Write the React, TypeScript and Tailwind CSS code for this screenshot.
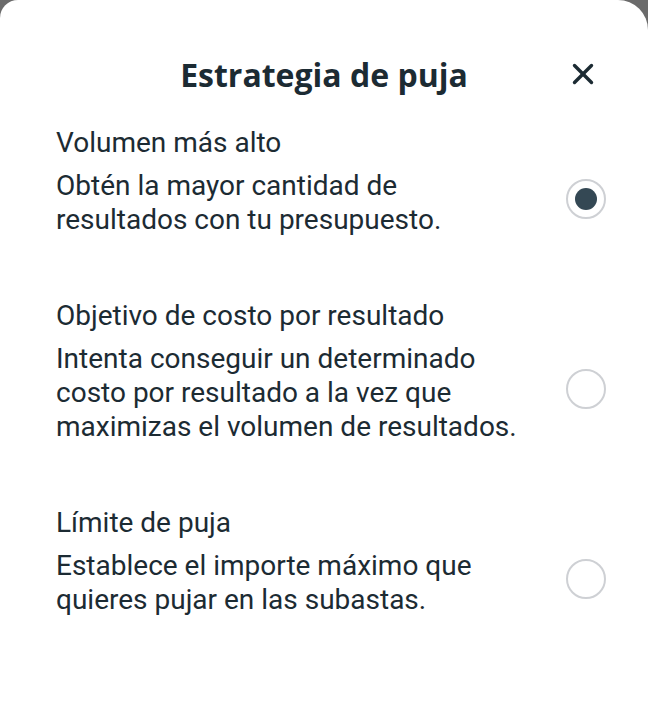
import { X } from 'lucide-react';

const options = [
  {
    title: 'Volumen más alto',
    description: ['Obtén la mayor cantidad de', 'resultados con tu presupuesto.'],
    selected: true,
  },
  {
    title: 'Objetivo de costo por resultado',
    description: ['Intenta conseguir un determinado', 'costo por resultado a la vez que', 'maximizas el volumen de resultados.'],
    selected: false,
  },
  {
    title: 'Límite de puja',
    description: ['Establece el importe máximo que', 'quieres pujar en las subastas.'],
    selected: false,
  },
];

export default function App() {
  return (
    <div className="h-[720px] w-[648px] overflow-hidden bg-[#6b6b6b] font-['Roboto',sans-serif] text-[#1c2b33]">
      <div className="h-full rounded-tl-[18px] rounded-tr-[30px] bg-white">
        <header className="grid grid-cols-[1fr_auto_1fr] items-center px-[56px] pt-[55px]">
          <span />
          <h1 className="font-['Open_Sans',sans-serif] text-[32px] font-bold leading-[40px]">Estrategia de puja</h1>
          <button className="mr-[-8px] mt-[-3px] justify-self-end text-[#1c2b33]">
            <X size={34} strokeWidth={2.4} />
          </button>
        </header>

        <div className="flex flex-col gap-[62px] px-[56px] pt-[31px]">
          {options.map((option) => (
            <div key={option.title}>
              <p className="text-[28px] leading-[34px]">{option.title}</p>
              <div className="mt-[9px] flex items-center justify-between">
                <p className="text-[28px] leading-[34px]">
                  {option.description.map((line) => (
                    <span key={line} className="block">{line}</span>
                  ))}
                </p>
                <span className="mb-[8px] mr-[-14px] flex h-[40px] w-[40px] shrink-0 items-center justify-center rounded-full border-2 border-[#ced0d4]">
                  {option.selected && <span className="h-[22px] w-[22px] rounded-full bg-[#344854]" />}
                </span>
              </div>
            </div>
          ))}
        </div>
      </div>
    </div>
  );
}
